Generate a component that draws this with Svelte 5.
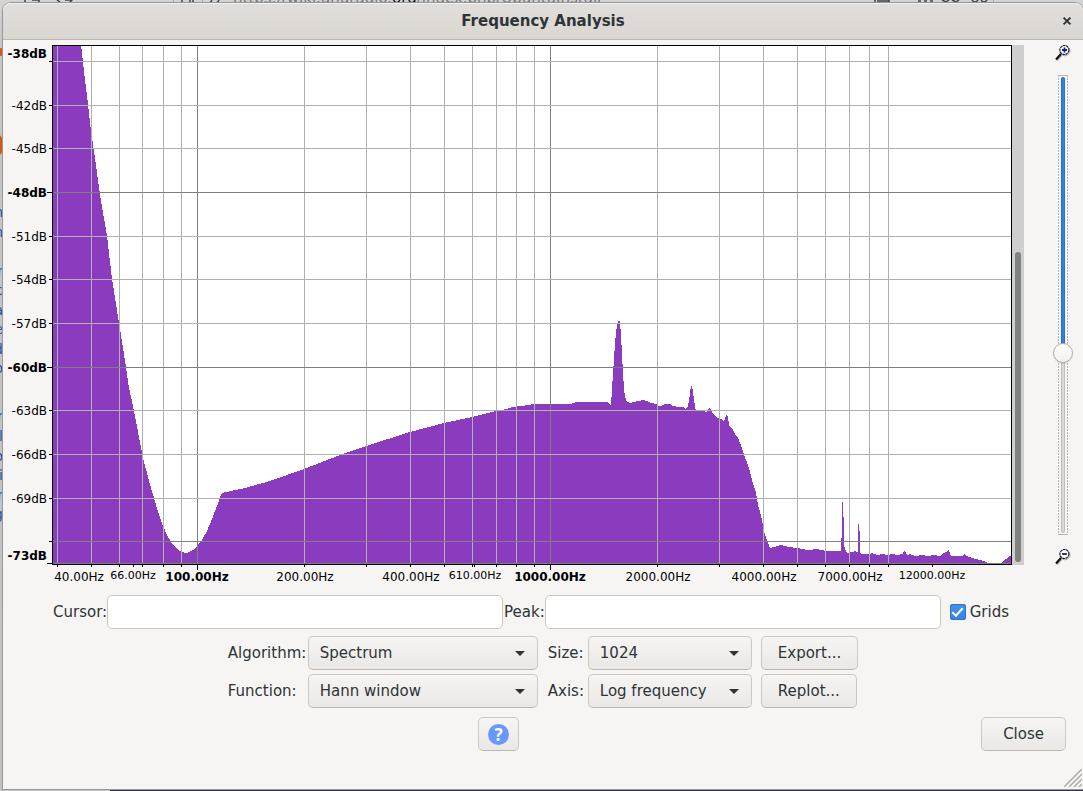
<script>
  const W = 960;
  const H = 520;

  const rows = [
    { at: 8, label: '-38dB', bold: true, tick: false },
    { at: 16, label: '', bold: false, tick: true },
    { at: 60, label: '-42dB', bold: false, tick: true },
    { at: 103, label: '-45dB', bold: false, tick: true },
    { at: 147, label: '-48dB', bold: true, tick: true },
    { at: 191, label: '-51dB', bold: false, tick: true },
    { at: 234, label: '-54dB', bold: false, tick: true },
    { at: 278, label: '-57dB', bold: false, tick: true },
    { at: 322, label: '-60dB', bold: true, tick: true },
    { at: 365, label: '-63dB', bold: false, tick: true },
    { at: 409, label: '-66dB', bold: false, tick: true },
    { at: 453, label: '-69dB', bold: false, tick: true },
    { at: 496, label: '', bold: false, tick: true },
    { at: 510, label: '-73dB', bold: true, tick: false },
    { at: 518, label: '', bold: true, tick: true }
  ];

  const columns = [
    { at: 5 }, { at: 39 }, { at: 67 }, { at: 81, minor: true }, { at: 90 }, { at: 111 }, { at: 129 },
    { at: 145, major: true },
    { at: 252 }, { at: 314 }, { at: 358 }, { at: 392 }, { at: 420 }, { at: 422, minor: true }, { at: 444 }, { at: 464 }, { at: 482 },
    { at: 498, major: true },
    { at: 605 }, { at: 667 }, { at: 711 }, { at: 745 }, { at: 773 }, { at: 797 }, { at: 817 }, { at: 836 },
    { at: 880, minor: true }
  ];

  const frequencies = [
    { at: 27, label: '40.00Hz' },
    { at: 81, label: '66.00Hz', kind: 'small' },
    { at: 145, label: '100.00Hz', kind: 'bold' },
    { at: 253, label: '200.00Hz' },
    { at: 359, label: '400.00Hz' },
    { at: 423, label: '610.00Hz', kind: 'small' },
    { at: 498, label: '1000.00Hz', kind: 'bold' },
    { at: 606, label: '2000.00Hz' },
    { at: 712, label: '4000.00Hz' },
    { at: 798, label: '7000.00Hz' },
    { at: 880, label: '12000.00Hz', kind: 'small' }
  ];

  const lines = [
    { at: 16 }, { at: 60 }, { at: 103 }, { at: 147, major: true }, { at: 191 }, { at: 234 }, { at: 278 },
    { at: 322, major: true }, { at: 365 }, { at: 409 }, { at: 453 }, { at: 496, major: true }, { at: 518, major: true }
  ];

  const spectrum =
    '0,520 0,0 29,0 31,17 33,35 35,51 37,68 39,86 41,99 43,113 45,128 47,143 49,156 55,191 60,234 67,278 74,322 ' +
    '77,343 80,356 86,387 91,413 97,436 102,453 106,467 111,481 116,492 121,500 126,505 130,507 134,508 137,507 ' +
    '141,505 145,501 150,495 155,486 160,474 165,461 169,450 170,448 193,443 218,436 252,424 288,410 314,401 ' +
    '358,387 392,378 420,372 444,366 455,364 460,362 470,361 482,359 498,359 499,359 519,359 524,357 556,357 557,359 ' +
    '559,360 560,344 561,329 562,314 563,299 564,288 565,280 566,276 567,276 568,277 569,291 570,309 571,328 572,344 ' +
    '573,351 574,355 575,357 578,358 582,357 586,356 591,355 595,356 599,358 604,359 606,361 609,361 613,359 ' +
    '618,359 621,361 626,362 631,362 633,364 636,361 637,356 638,348 639,341 640,341 641,347 642,354 643,362 ' +
    '644,365 650,366 655,367 657,363 659,364 661,369 664,372 669,374 671,376 673,374 674,371 675,369 676,372 ' +
    '677,379 678,382 681,385 683,389 686,393 688,398 690,403 692,409 694,415 696,420 698,427 700,435 702,441 ' +
    '704,448 705,453 706,460 708,467 710,475 711,480 712,487 714,492 716,498 718,503 722,502 728,500 734,501 ' +
    '736,502 745,503 756,505 765,504 774,506 789,506 789,493 790,493 790,457 791,457 791,472 792,472 792,500 793,504 ' +
    '795,508 801,507 803,505 805,508 806,506 806,479 807,479 807,486 808,486 808,507 809,509 818,509 820,508 ' +
    '825,510 830,509 836,510 840,509 845,510 851,509 852,506 853,506 854,508 855,510 858,509 863,511 870,510 875,511 882,510 888,511 ' +
    '891,508 895,507 896,505 897,505 898,509 899,511 911,511 912,509 913,508 914,511 920,513 928,515 934,517 936,518 949,518 ' +
    '951,516 954,514 957,511 960,510 960,520';

  // Page fragments visible beside the dialog.
  const fragments = [
    ['n', 213], ['n', 233], ['r', 272], ['c', 291], ['a', 311], ['e', 330], ['d', 350], ['o', 369],
    ['r', 417], ['el', 437], ['o', 457], ['i', 476], ['r', 496], ['g', 515]
  ];

  let algorithm = $state('Spectrum');
  let windowFn = $state('Hann window');
  let size = $state('1024');
  let axis = $state('Log frequency');
  let grids = $state(true);
  let zoom = $state(61);
  let cursor = $state('');
  let peak = $state('');
</script>

{#snippet magnifier(plus)}
  <svg class="magnifier" viewBox="0 0 16 16" aria-hidden="true">
    <path d="M6.5 10.5 L2 15.5" stroke="#bdbdbd" stroke-width="2" fill="none" />
    <circle cx="10" cy="5.8" r="5" fill="none" stroke="#a8a8a8" stroke-width="1" />
    <path d="M6 9 L1 14.6" stroke="#111" stroke-width="2.2" fill="none" />
    <circle cx="9.4" cy="5" r="4.5" fill="#fff" stroke="#111" stroke-width="1.1" stroke-dasharray="2.6 .6" />
    <path d={plus ? 'M7 5h5M9.5 2.5v5' : 'M7 5h5'} stroke="#1a1aa6" stroke-width="1.8" fill="none" />
  </svg>
{/snippet}

{#snippet arrow()}
  <svg class="arrow" viewBox="0 0 10 5" aria-hidden="true"><path d="M0 0h10L5 5z" fill="#2e3436" /></svg>
{/snippet}

<div class="desktop">
  <div class="backdrop" aria-hidden="true">
    <p class="address"><span>https://wiki.gnuradio.</span><b>org</b><span>/index.php/UbuntuInstall</span></p>
    <svg class="toolbar" width="1083" height="3" viewBox="0 0 1083 3">
      <path d="M25 0v2M32 0h7v2M57 0l3 2M65 0h7l-2 2M182 0v3M190 0v2M193 0v2M212 0l-2 3M219 0l-2 3M875 0v2M877 1h12M889 0v2M918 1h3M924 1h3M930 1h3M942 0l4 2 3-2M952 0l4 2 3-2M972 0q3 4 6 0M981 0q3 4 6 0" fill="none" stroke="#444" stroke-width="1.5" />
      <path d="M173.500 0v3M202.500 0v3M993.500 0v3" stroke="#aaa" />
    </svg>
    <i class="dot small"></i>
    <i class="dot"></i>
    {#each fragments as [text, top]}
      <span class="fragment" style="top: {top}px">{text}</span>
    {/each}
    <div class="panel"></div>
  </div>

  <main class="window">
    <header>
      <h1>Frequency Analysis</h1>
      <button class="dismiss" aria-label="Close window">
        <svg viewBox="0 0 8 8" aria-hidden="true"><path d="M.6.6l6.800 6.800M7.400.6L.6 7.400" stroke="#2e3436" stroke-width="2" /></svg>
      </button>
    </header>

    <section class="chart">
      <div class="ruler-y">
        {#each rows as row}
          {#if row.tick}
            <i class:long={row.bold} style="top: {(row.at / H) * 100}%"></i>
          {/if}
          {#if row.label}
            <span class:bold={row.bold} style="top: {(row.at / H) * 100}%">{row.label}</span>
          {/if}
        {/each}
      </div>

      <svg class="plot" viewBox="0 0 {W} {H}" preserveAspectRatio="none" role="img" aria-label="Spectrum">
        <rect width={W} height={H} fill="#fff" />
        <polygon points={spectrum} fill="#8b3bbe" />
        {#if grids}
          {#each columns.filter((c) => !c.minor) as c}
            <rect x={c.at} y="0" width="1" height={H} fill={c.major ? '#7f7f7f' : '#b0b0b0'} />
          {/each}
          {#each lines as l}
            <rect x="0" y={l.at} width={W} height="1" fill={l.major ? '#7f7f7f' : '#b0b0b0'} />
          {/each}
        {/if}
        <path d="M0 0H960V520H0zM1 1V519H959V1z" fill="#000" fill-rule="evenodd" />
      </svg>

      <div class="scrollbar"><div class="thumb"></div></div>

      <div class="zoom">
        {@render magnifier(true)}
        <input type="range" min="0" max="100" aria-label="Vertical zoom" bind:value={zoom} style="--fill: {zoom}%" />
        {@render magnifier(false)}
      </div>

      <div class="ruler-x">
        {#each columns as c}
          <i class:long={c.major} style="left: {(c.at / W) * 100}%"></i>
        {/each}
        {#each frequencies as f}
          <span class={f.kind} style="left: {(f.at / W) * 100}%">{f.label}</span>
        {/each}
      </div>
    </section>

    <section class="readouts">
      <label for="cursor">Cursor:</label>
      <input id="cursor" type="text" readonly bind:value={cursor} />
      <label class="peak" for="peak">Peak:</label>
      <input id="peak" type="text" readonly bind:value={peak} />
      <label class="check"><input type="checkbox" bind:checked={grids} />Grids</label>
    </section>

    <section class="options">
      <label for="algorithm">Algorithm:</label>
      <div class="select">
        <select id="algorithm" bind:value={algorithm}><option>Spectrum</option></select>
        {@render arrow()}
      </div>
      <label class="second" for="size">Size:</label>
      <div class="select">
        <select id="size" bind:value={size}><option>1024</option></select>
        {@render arrow()}
      </div>
      <button>Export...</button>

      <label for="function">Function:</label>
      <div class="select">
        <select id="function" bind:value={windowFn}><option>Hann window</option></select>
        {@render arrow()}
      </div>
      <label class="second" for="axis">Axis:</label>
      <div class="select">
        <select id="axis" bind:value={axis}><option>Log frequency</option></select>
        {@render arrow()}
      </div>
      <button>Replot...</button>
    </section>

    <footer>
      <div class="middle"><button class="help" aria-label="Help"><span>?</span></button></div>
      <button class="close">Close</button>
    </footer>

    <svg class="grip" viewBox="0 0 18 18" aria-hidden="true">
      <path d="M0 18L18 0M5 18L18 5M10 18L18 10M15 18L18 15" stroke="#aeaaa4" stroke-width="1.5" />
    </svg>
  </main>
</div>

<style>
  :global(body) {
    margin: 0;
    background: #c6c6c6;
  }
  .desktop {
    position: relative;
    box-sizing: border-box;
    min-height: 100vh;
    padding: 3px 0 2px 3px;
    display: flex;
    overflow: hidden;
    font-family: "DejaVu Sans", sans-serif;
    font-size: 15px;
    color: #2e3436;
  }
  .backdrop {
    position: absolute;
    inset: 0;
    overflow: hidden;
    background: linear-gradient(#d4d4d4, #c6c6c6 40px, #c2c2c2);
  }
  .address {
    position: absolute;
    left: 233px;
    top: -10px;
    margin: 0;
    line-height: 16px;
    font-size: 15px;
    color: #777;
    white-space: nowrap;
  }
  .address b {
    font-weight: 400;
    color: #111;
  }
  .toolbar {
    position: absolute;
    left: 0;
    top: 0;
  }
  .dot {
    position: absolute;
    left: -24px;
    top: 131px;
    width: 28px;
    height: 28px;
    border-radius: 50%;
    background: #cf5a12;
  }
  .dot.small {
    left: -4px;
    top: 48px;
    width: 8px;
    height: 8px;
  }
  .fragment {
    position: absolute;
    right: calc(100% - 3px);
    line-height: 16px;
    margin-top: -9px;
    font-size: 14px;
    color: #1f55ab;
  }
  .panel {
    position: absolute;
    left: 110px;
    right: 0;
    bottom: 0;
    height: 6px;
    background: #34344c;
  }
  .window {
    position: relative;
    flex: 1;
    display: flex;
    flex-direction: column;
    min-width: 0;
    background: #f6f5f3;
    border-radius: 8px 8px 0 0;
    box-shadow: 0 0 0 1px #989898;
  }
  header {
    position: relative;
    display: flex;
    align-items: center;
    justify-content: center;
    height: 36px;
    border-bottom: 1px solid #bfb8b1;
    border-radius: 8px 8px 0 0;
    background: linear-gradient(#e1dedb, #dad6d2);
    box-shadow: inset 0 1px #f2f0ee;
  }
  h1 {
    margin: 0;
    font-size: 15px;
    line-height: 18px;
    font-weight: 700;
  }
  .dismiss {
    position: absolute;
    right: 8px;
    width: 16px;
    height: 16px;
    padding: 4px;
    border: 0;
    background: none;
  }
  .dismiss svg {
    display: block;
    overflow: visible;
  }
  .chart {
    flex: 1;
    display: grid;
    grid-template-columns: 49px 1fr 12px 59px;
    grid-template-rows: 1fr 30px;
    margin-top: 5px;
    min-height: 240px;
    font-size: 12px;
    line-height: 14px;
    color: #000;
  }
  .ruler-y,
  .ruler-x {
    position: relative;
  }
  .ruler-y i {
    position: absolute;
    right: 0;
    width: 3px;
    height: 1px;
    background: #000;
  }
  .ruler-y i.long {
    width: 5px;
  }
  .ruler-y span {
    position: absolute;
    right: 5px;
    margin-top: -6px;
  }
  .bold {
    font-weight: 700;
  }
  .plot {
    display: block;
    width: 100%;
    height: 100%;
    min-height: 0;
    shape-rendering: crispEdges;
  }
  .ruler-x {
    grid-column: 2;
    grid-row: 2;
  }
  .ruler-x i {
    position: absolute;
    top: 0;
    width: 1px;
    height: 2px;
    background: #000;
  }
  .ruler-x i.long {
    height: 5px;
  }
  .ruler-x span {
    position: absolute;
    top: 5px;
    transform: translateX(-50%);
  }
  .ruler-x .small {
    top: 4px;
    font-size: 11px;
  }
  .scrollbar {
    display: flex;
    flex-direction: column;
    justify-content: flex-end;
    padding: 0 3px 3px;
    background: #cecece;
  }
  .thumb {
    height: 60%;
    border-radius: 3px;
    background: #7e8281;
  }
  .zoom {
    display: flex;
    flex-direction: column;
    align-items: center;
    padding-left: 18px;
  }
  .magnifier {
    width: 16px;
    height: 16px;
  }
  input[type='range'] {
    appearance: none;
    writing-mode: vertical-lr;
    box-sizing: border-box;
    flex: 1;
    width: 20px;
    min-height: 0;
    margin: 14px 0;
    padding: 2px 0;
    background:
      linear-gradient(#f6f5f3, #f6f5f3) center / 8px calc(100% - 2px) no-repeat,
      repeating-linear-gradient(#b8b5b2 0 2px, #f6f5f3 2px 3px) center / 10px 100% no-repeat;
  }
  input[type='range']::-webkit-slider-runnable-track {
    width: 4px;
    height: 100%;
    border-radius: 2px;
    background: linear-gradient(#3080e2 var(--fill), #dcd8d4 var(--fill));
    box-shadow: inset 0 0 0 1px rgba(0, 0, 0, 0.12);
  }
  input[type='range']::-webkit-slider-thumb {
    appearance: none;
    box-sizing: border-box;
    width: 20px;
    height: 20px;
    margin-left: -8px;
    border: 1px solid #b5aea8;
    border-radius: 50%;
    background: linear-gradient(#fff, #f1efed);
    box-shadow: 0 1px 1px rgba(0, 0, 0, 0.12);
  }
  .readouts {
    display: flex;
    align-items: center;
    padding: 0 74px 0 50px;
  }
  .readouts input[type='text'] {
    box-sizing: border-box;
    flex: 1;
    min-width: 0;
    height: 34px;
    padding: 0 8px;
    border: 1px solid #cdc7c2;
    border-radius: 5px;
    background: #fff;
    font: inherit;
  }
  .peak {
    margin-left: 1px;
  }
  .check {
    display: flex;
    align-items: center;
    gap: 4px;
    margin-left: 9px;
  }
  .check input {
    appearance: none;
    display: grid;
    place-items: center;
    width: 16px;
    height: 16px;
    margin: 0;
    border-radius: 3px;
    background: #fff;
    box-shadow: inset 0 0 0 1px #cdc7c2;
  }
  .check input:checked {
    background: linear-gradient(#4a92ea, #3584e4);
    box-shadow: inset 0 0 0 1px #2b74cf;
  }
  .check input:checked::after {
    content: '';
    width: 9px;
    height: 4px;
    margin-bottom: 3px;
    border-left: 2px solid #fff;
    border-bottom: 2px solid #fff;
    transform: rotate(-48deg);
  }
  .options {
    display: grid;
    grid-template-columns: 80px 230px 50px 164px auto;
    gap: 4px 0;
    align-items: center;
    justify-content: center;
    padding-top: 7px;
  }
  .second {
    padding-left: 10px;
  }
  .select {
    position: relative;
  }
  select,
  .options button,
  footer button {
    box-sizing: border-box;
    height: 34px;
    border: 1px solid #cdc7c2;
    border-bottom-color: #bfb8b1;
    border-radius: 5px;
    background: linear-gradient(#f6f5f4, #eae8e6);
    font: inherit;
    color: inherit;
  }
  select {
    appearance: none;
    display: block;
    width: 100%;
    padding: 0 30px 0 11px;
  }
  .arrow {
    position: absolute;
    right: 13px;
    top: 15px;
    width: 10px;
    height: 5px;
    pointer-events: none;
  }
  .options button {
    justify-self: start;
    margin-left: 9px;
    padding: 0 16px;
  }
  footer {
    display: flex;
    padding: 9px 17px 38px 13px;
  }
  .middle {
    flex: 1;
    display: flex;
    justify-content: center;
  }
  footer .help {
    display: grid;
    place-items: center;
    width: 41px;
    padding: 0;
  }
  .help span {
    width: 21px;
    height: 21px;
    border-radius: 50%;
    background: #6699ff;
    color: #fff;
    font: 700 17px/21px "Noto Sans", sans-serif;
  }
  footer .close {
    padding: 0 21px;
  }
  .grip {
    position: absolute;
    right: 1px;
    bottom: 2px;
    width: 18px;
    height: 18px;
  }
</style>
